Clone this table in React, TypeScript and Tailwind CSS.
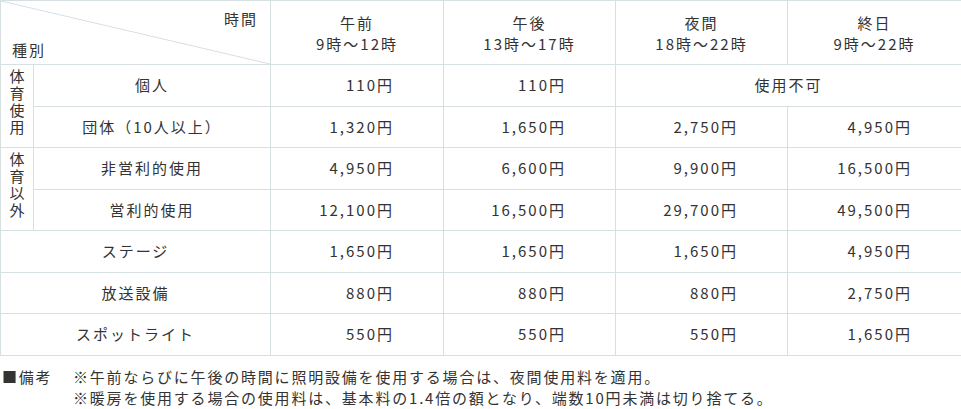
const rows = [
  { group: '体育使用', label: '個人', values: ['110円', '110円'], closed: '使用不可' },
  { group: '', label: '団体（10人以上）', values: ['1,320円', '1,650円', '2,750円', '4,950円'] },
  { group: '体育以外', label: '非営利的使用', values: ['4,950円', '6,600円', '9,900円', '16,500円'] },
  { group: '', label: '営利的使用', values: ['12,100円', '16,500円', '29,700円', '49,500円'] },
];

const extras = [
  { label: 'ステージ', values: ['1,650円', '1,650円', '1,650円', '4,950円'] },
  { label: '放送設備', values: ['880円', '880円', '880円', '2,750円'] },
  { label: 'スポットライト', values: ['550円', '550円', '550円', '1,650円'] },
];

const periods = [
  ['午前', '9時～12時'],
  ['午後', '13時～17時'],
  ['夜間', '18時～22時'],
  ['終日', '9時～22時'],
];

const cell = 'border border-[#d6e0e3] p-0';
const price = `${cell} text-right pr-[49px]`;

export default function App() {
  return (
    <div
      className="w-[961px] h-[409px] bg-white text-[#333] text-[15px] overflow-hidden"
      style={{ fontFamily: '"Noto Sans CJK JP", "Noto Sans", sans-serif' }}
    >
      <table className="w-[961px] table-fixed border-collapse tracking-[2px]">
        <colgroup>
          <col className="w-[33px]" />
          <col className="w-[237px]" />
          <col className="w-[173px]" />
          <col className="w-[172px]" />
          <col className="w-[172px]" />
          <col className="w-[174px]" />
        </colgroup>
        <thead>
          <tr className="h-[64px]">
            <th colSpan={2} className={`${cell} relative font-normal`}>
              <svg className="absolute inset-0 w-full h-full" preserveAspectRatio="none" viewBox="0 0 100 100">
                <line x1="0" y1="0" x2="100" y2="100" stroke="#d6e0e3" strokeWidth="1" vectorEffect="non-scaling-stroke" />
              </svg>
              <div className="relative h-[63px]">
                <span className="absolute right-[12px] top-[7px]">時間</span>
                <span className="absolute left-[11px] top-[38px]">種別</span>
              </div>
            </th>
            {periods.map(([a, b]) => (
              <th key={a} className={`${cell} font-normal leading-[21px]`}>
                <div>{a}</div>
                <div>{b}</div>
              </th>
            ))}
          </tr>
        </thead>
        <tbody>
          {rows.map((r, i) => (
            <tr key={i} className="h-[41.5px]">
              {r.group && (
                <td rowSpan={2} className={`${cell} text-center`}>
                  <span className="inline-block [writing-mode:vertical-rl] leading-[15px]">{r.group}</span>
                </td>
              )}
              <td className={`${cell} text-center`}>{r.label}</td>
              {r.values.map((v, j) => (
                <td key={j} className={price}>
                  {v}
                </td>
              ))}
              {r.closed && (
                <td colSpan={2} className={`${cell} text-center`}>
                  {r.closed}
                </td>
              )}
            </tr>
          ))}
          {extras.map((r) => (
            <tr key={r.label} className="h-[41.5px]">
              <td colSpan={2} className={`${cell} text-center`}>
                {r.label}
              </td>
              {r.values.map((v, j) => (
                <td key={j} className={price}>
                  {v}
                </td>
              ))}
            </tr>
          ))}
        </tbody>
      </table>

      <div className="flex pt-[10px] leading-[21px] tracking-[1.8px]">
        <div className="w-[73px] pl-[2px]">■備考</div>
        <div>
          <p>※午前ならびに午後の時間に照明設備を使用する場合は、夜間使用料を適用。</p>
          <p>※暖房を使用する場合の使用料は、基本料の1.4倍の額となり、端数10円未満は切り捨てる。</p>
        </div>
      </div>
    </div>
  );
}
